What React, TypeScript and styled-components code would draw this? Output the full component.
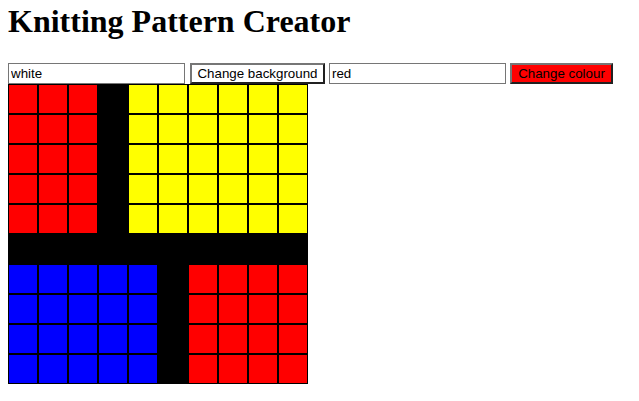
import React from "react";
import styled, { createGlobalStyle } from "styled-components";

const GlobalStyle = createGlobalStyle`
  body {
    margin: 0;
    background: #ffffff;
    font-family: "Liberation Serif", "Times New Roman", serif;
  }
`;

const StyledPage = styled.div`
  padding: 0 8px;
`;

const StyledTitle = styled.h1`
  margin: 3px 0 0;
  font-size: 32px;
  line-height: 37px;
  font-weight: bold;
  color: #000000;
`;

const StyledControls = styled.div`
  display: flex;
  margin-top: 23px;
  height: 21px;
`;

const StyledInput = styled.input`
  box-sizing: border-box;
  width: 177px;
  height: 21px;
  margin: 0 4px 0 0;
  padding: 1px 2px;
  border: 1px solid #767676;
  font-family: "Liberation Sans", Arial, sans-serif;
  font-size: 13.33px;
  color: #000000;
  outline: none;
`;

const StyledButton = styled.button<{ bg: string; w: number }>`
  box-sizing: border-box;
  width: ${({ w }) => w}px;
  height: 21px;
  margin: 0 4px 0 ${({ w }) => (w > 120 ? 1 : 0)}px;
  padding: 0 4px;
  border: 2px outset #767676;
  background-color: ${({ bg }) => bg};
  font-family: "Liberation Sans", Arial, sans-serif;
  font-size: 13.33px;
  line-height: 15px;
  color: #000000;
  white-space: nowrap;
`;

const StyledGrid = styled.div`
  display: grid;
  grid-template-columns: repeat(10, 30px);
  grid-auto-rows: 30px;
  width: 300px;
`;

const StyledCell = styled.div<{ colour: string }>`
  box-sizing: border-box;
  border: 1px solid #000000;
  background-color: ${({ colour }) => colour};
`;

const cellColour = (row: number, col: number): string => {
  if (row < 5) {
    if (col < 3) return "#ff0000";
    if (col === 3) return "#000000";
    return "#ffff00";
  }
  if (row === 5) return "#000000";
  if (col < 5) return "#0000ff";
  if (col === 5) return "#000000";
  return "#ff0000";
};

const cells = Array.from({ length: 100 }, (_, i) => ({
  id: i,
  colour: cellColour(Math.floor(i / 10), i % 10),
}));

const App: React.FC = () => {
  return (
    <StyledPage>
      <GlobalStyle />
      <StyledTitle>Knitting Pattern Creator</StyledTitle>
      <StyledControls>
        <StyledInput defaultValue="white" />
        <StyledButton bg="#ffffff" w={135}>
          Change background
        </StyledButton>
        <StyledInput defaultValue="red" />
        <StyledButton bg="#ff0000" w={103}>
          Change colour
        </StyledButton>
      </StyledControls>
      <StyledGrid>
        {cells.map((cell) => (
          <StyledCell key={cell.id} colour={cell.colour} />
        ))}
      </StyledGrid>
    </StyledPage>
  );
};

export default App;
